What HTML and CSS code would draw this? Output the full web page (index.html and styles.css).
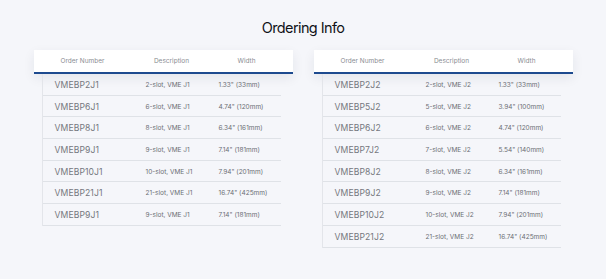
FILE: index.html
```html
<!DOCTYPE html>
<html lang="en">
<head>
<meta charset="utf-8">
<title>Ordering Info</title>
<link rel="stylesheet" href="styles.css">
</head>
<body>
<main class="page">
  <h1 class="title">Ordering Info</h1>
  <div class="tables">
    <section class="order-table">
      <div class="head">
        <span>Order Number</span><span>Description</span><span>Width</span>
      </div>
      <div class="rows">
        <div class="row"><span class="pn">VMEBP2J1</span><span>2-slot, VME J1</span><span>1.33" (33mm)</span></div>
        <div class="row"><span class="pn">VMEBP6J1</span><span>6-slot, VME J1</span><span>4.74" (120mm)</span></div>
        <div class="row"><span class="pn">VMEBP8J1</span><span>8-slot, VME J1</span><span>6.34" (161mm)</span></div>
        <div class="row"><span class="pn">VMEBP9J1</span><span>9-slot, VME J1</span><span>7.14" (181mm)</span></div>
        <div class="row"><span class="pn">VMEBP10J1</span><span>10-slot, VME J1</span><span>7.94" (201mm)</span></div>
        <div class="row"><span class="pn">VMEBP21J1</span><span>21-slot, VME J1</span><span>16.74" (425mm)</span></div>
        <div class="row"><span class="pn">VMEBP9J1</span><span>9-slot, VME J1</span><span>7.14" (181mm)</span></div>
      </div>
    </section>
    <section class="order-table">
      <div class="head">
        <span>Order Number</span><span>Description</span><span>Width</span>
      </div>
      <div class="rows">
        <div class="row"><span class="pn">VMEBP2J2</span><span>2-slot, VME J2</span><span>1.33" (33mm)</span></div>
        <div class="row"><span class="pn">VMEBP5J2</span><span>5-slot, VME J2</span><span>3.94" (100mm)</span></div>
        <div class="row"><span class="pn">VMEBP6J2</span><span>6-slot, VME J2</span><span>4.74" (120mm)</span></div>
        <div class="row"><span class="pn">VMEBP7J2</span><span>7-slot, VME J2</span><span>5.54" (140mm)</span></div>
        <div class="row"><span class="pn">VMEBP8J2</span><span>8-slot, VME J2</span><span>6.34" (161mm)</span></div>
        <div class="row"><span class="pn">VMEBP9J2</span><span>9-slot, VME J2</span><span>7.14" (181mm)</span></div>
        <div class="row"><span class="pn">VMEBP10J2</span><span>10-slot, VME J2</span><span>7.94" (201mm)</span></div>
        <div class="row"><span class="pn">VMEBP21J2</span><span>21-slot, VME J2</span><span>16.74" (425mm)</span></div>
      </div>
    </section>
  </div>
</main>
</body>
</html>
```

FILE: styles.css
```css
html, body {
  margin: 0;
  padding: 0;
  background: #f5f6fa;
}

.page {
  width: 606px;
  height: 279px;
  box-sizing: border-box;
  padding-top: 18px;
  font-family: Inter, "Noto Sans", sans-serif;
  background: #f5f6fa;
}

.title {
  margin: 0;
  text-align: center;
  font-size: 14.5px;
  line-height: 20px;
  font-weight: 400;
  color: #111318;
  letter-spacing: -0.6px;
}

.tables {
  display: flex;
  justify-content: center;
  align-items: flex-start;
  gap: 21px;
  margin-top: 12px;
}

.order-table {
  width: 259px;
}

.head {
  display: grid;
  grid-template-columns: 98px 80px 70px;
  height: 22px;
  align-items: center;
  background: #ffffff;
  border-bottom: 2px solid #1d4a8f;
  box-shadow: 0 4px 12px rgba(30, 40, 70, 0.08);
  font-size: 6.5px;
  color: #8a8d93;
  text-align: center;
}

.rows {
  margin: 0 12px 0 8px;
  border-left: 1px solid #e3e5ea;
}

.row {
  display: grid;
  grid-template-columns: 91px 73px 1fr;
  align-items: center;
  box-sizing: border-box;
  height: 21.7px;
  padding-left: 12px;
  padding-top: 1px;
  border-bottom: 1px solid #dfe2e7;
  font-size: 6.5px;
  color: #6b6e74;
}

.row .pn {
  font-size: 8.6px;
  color: #74777d;
  letter-spacing: 0.1px;
}
```
